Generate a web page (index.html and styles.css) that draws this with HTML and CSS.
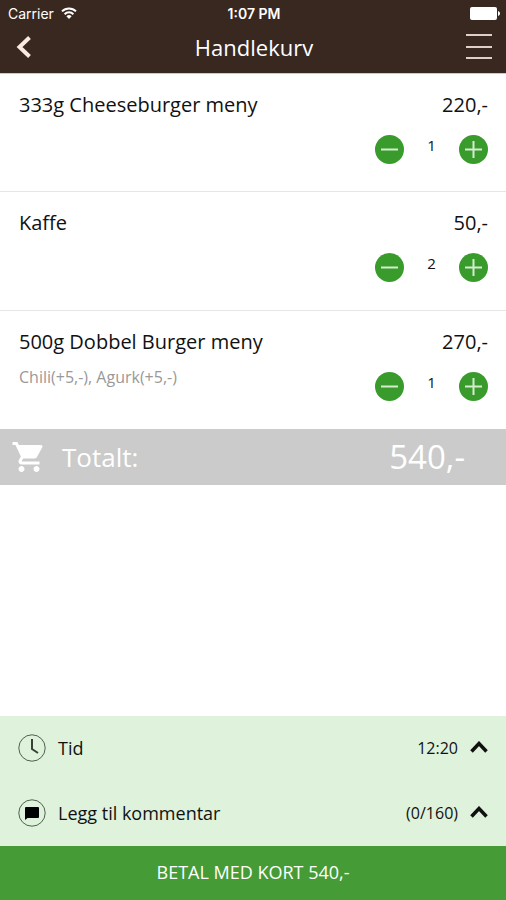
FILE: index.html
```html
<!DOCTYPE html>
<html lang="no">
<head>
<meta charset="utf-8">
<meta name="viewport" content="width=device-width, initial-scale=1">
<title>Handlekurv</title>
<link rel="stylesheet" href="styles.css">
</head>
<body>
<div class="app">
  <header class="header">
    <div class="status">
      <div class="status-carrier">
        <span>Carrier</span>
        <svg width="16" height="12" viewBox="0 0 16 12" fill="none" stroke="currentColor" stroke-width="2" aria-hidden="true">
          <path d="M1 4.400a10 10 0 0 1 14 0M3.600 7.200a6.200 6.200 0 0 1 8.800 0"/>
          <path d="M8 12 5.400 9.300a3.800 3.800 0 0 1 5.200 0Z" fill="currentColor" stroke="none"/>
        </svg>
      </div>
      <div class="status-time">1:07 PM</div>
      <svg class="status-battery" width="30" height="13" viewBox="0 0 30 13" fill="currentColor" aria-hidden="true">
        <rect width="27" height="13" rx="2"/>
        <path d="M28 4c1.400.4 2 1.400 2 2.500s-.6 2.100-2 2.500Z"/>
      </svg>
    </div>
    <nav class="nav">
      <button class="icon-button" type="button" aria-label="Tilbake">
        <svg width="15" height="22" viewBox="0 0 15 22" fill="none" stroke="#fbe9df" stroke-width="4" aria-hidden="true"><path d="M13.500 1.500 3.500 11l10 9.500"/></svg>
      </button>
      <h1 class="title">Handlekurv</h1>
      <button class="icon-button icon-button-end" type="button" aria-label="Meny">
        <svg width="26" height="26" viewBox="0 0 26 26" aria-hidden="true"><path d="M0 0h26v2H0zM0 12h26v2H0zM0 23h26v2H0z" fill="#e0cfc4"/></svg>
      </button>
    </nav>
  </header>

  <main class="main">
    <ul class="items">
      <li class="item">
        <div class="item-line"><h2 class="item-name">333g Cheeseburger meny</h2><span class="item-price">220,-</span></div>
        <div class="item-line">
          <p class="item-extra"></p>
          <div class="stepper">
            <button class="step" type="button" aria-label="Færre"><svg width="29" height="29" viewBox="0 0 29 29" aria-hidden="true"><path d="M6 14.500h17"/></svg></button>
            <output class="quantity">1</output>
            <button class="step" type="button" aria-label="Flere"><svg width="29" height="29" viewBox="0 0 29 29" aria-hidden="true"><path d="M6 14.500h17M14.500 6v17"/></svg></button>
          </div>
        </div>
      </li>
      <li class="item">
        <div class="item-line"><h2 class="item-name">Kaffe</h2><span class="item-price">50,-</span></div>
        <div class="item-line">
          <p class="item-extra"></p>
          <div class="stepper">
            <button class="step" type="button" aria-label="Færre"><svg width="29" height="29" viewBox="0 0 29 29" aria-hidden="true"><path d="M6 14.500h17"/></svg></button>
            <output class="quantity">2</output>
            <button class="step" type="button" aria-label="Flere"><svg width="29" height="29" viewBox="0 0 29 29" aria-hidden="true"><path d="M6 14.500h17M14.500 6v17"/></svg></button>
          </div>
        </div>
      </li>
      <li class="item">
        <div class="item-line"><h2 class="item-name">500g Dobbel Burger meny</h2><span class="item-price">270,-</span></div>
        <div class="item-line">
          <p class="item-extra">Chili(+5,-), Agurk(+5,-)</p>
          <div class="stepper">
            <button class="step" type="button" aria-label="Færre"><svg width="29" height="29" viewBox="0 0 29 29" aria-hidden="true"><path d="M6 14.500h17"/></svg></button>
            <output class="quantity">1</output>
            <button class="step" type="button" aria-label="Flere"><svg width="29" height="29" viewBox="0 0 29 29" aria-hidden="true"><path d="M6 14.500h17M14.500 6v17"/></svg></button>
          </div>
        </div>
      </li>
    </ul>
    <div class="total">
      <svg width="36" height="36" viewBox="0 0 24 24" fill="currentColor" aria-hidden="true"><path d="M7 18c-1.100 0-1.990.9-1.990 2S5.900 22 7 22s2-.9 2-2-.9-2-2-2zM1 2v2h2l3.600 7.590-1.350 2.450c-.16.280-.25.610-.25.960 0 1.100.9 2 2 2h12v-2H7.420c-.14 0-.25-.11-.25-.25l.03-.12.9-1.630h7.450c.75 0 1.410-.41 1.750-1.030l3.580-6.490A1 1 0 0 0 20 4H5.210l-.94-2H1zm16 16c-1.100 0-1.990.9-1.990 2s.89 2 1.990 2 2-.9 2-2-.9-2-2-2z"/></svg>
      <span class="total-label">Totalt:</span>
      <span class="total-sum">540,-</span>
    </div>
  </main>

  <footer class="footer">
    <button class="option" type="button">
      <svg width="28" height="28" viewBox="0 0 28 28" fill="none" aria-hidden="true">
        <circle cx="14" cy="14" r="13.200" stroke="#526050"/>
        <path d="M14 5v10l6 4" stroke="#364235" stroke-width="2"/>
      </svg>
      <span class="option-label">Tid</span>
      <span class="option-value">12:20</span>
      <svg width="18" height="14" viewBox="0 0 18 14" fill="none" stroke="currentColor" stroke-width="3.500" aria-hidden="true"><path d="M1.500 10.500 9 2.500l7.500 8"/></svg>
    </button>
    <button class="option" type="button">
      <svg width="28" height="28" viewBox="0 0 28 28" fill="none" aria-hidden="true">
        <circle cx="14" cy="14" r="13.200" stroke="#526050"/>
        <path d="M8 8h12a1 1 0 0 1 1 1v9a1 1 0 0 1-1 1H9.500L7 21V9a1 1 0 0 1 1-1Z" fill="#000"/>
      </svg>
      <span class="option-label">Legg til kommentar</span>
      <span class="option-value">(0/160)</span>
      <svg width="18" height="14" viewBox="0 0 18 14" fill="none" stroke="currentColor" stroke-width="3.500" aria-hidden="true"><path d="M1.500 10.500 9 2.500l7.500 8"/></svg>
    </button>
    <button class="pay" type="button">BETAL MED KORT 540,-</button>
  </footer>
</div>
</body>
</html>
```
FILE: styles.css
```css
* {
  box-sizing: border-box;
}

body {
  margin: 0;
  background: #fff;
  color: #111;
  font-family: "Open Sans", "Noto Sans", sans-serif;
}

button {
  margin: 0;
  padding: 0;
  border: 0;
  background: none;
  color: inherit;
  font: inherit;
  cursor: pointer;
}

svg {
  display: block;
  flex: none;
}

.app {
  display: flex;
  flex-direction: column;
  min-height: 100vh;
}

.header {
  background: #39281f;
  border-bottom: 1px solid #cfc8c4;
  color: #fff;
}

.status {
  display: grid;
  grid-template-columns: 1fr auto 1fr;
  align-items: center;
  height: 26px;
  padding: 0 6px 0 8px;
  font-family: Inter, "Liberation Sans", sans-serif;
  font-size: 14px;
}

.status-carrier {
  display: flex;
  align-items: center;
  gap: 7px;
}

.status-time {
  font-weight: 600;
}

.status-battery {
  justify-self: end;
}

.nav {
  display: grid;
  grid-template-columns: 1fr auto 1fr;
  align-items: center;
  height: 47px;
  padding: 0 14px 5px 16px;
}

.icon-button {
  justify-self: start;
}

.icon-button-end {
  justify-self: end;
}

.title {
  margin: 0;
  font-size: 22px;
  font-weight: 400;
  line-height: 30px;
}

.main {
  flex: 1;
}

.items {
  margin: 0;
  padding: 0;
  list-style: none;
}

.item {
  height: 119px;
  padding: 16px 18px 0 19px;
  border-bottom: 1px solid #e6e6e6;
}

.item:first-child {
  height: 118px;
}

.item:last-child {
  height: 118px;
  border-bottom: 0;
}

.item-line {
  display: flex;
  justify-content: space-between;
}

.item-name,
.item-price {
  margin: 0;
  font-size: 20px;
  font-weight: 400;
  line-height: 30px;
}

.item-extra {
  margin: 10px 0 0;
  color: #999;
  font-size: 16px;
  line-height: 20px;
}

.stepper {
  display: flex;
  gap: 16px;
  margin-top: 15px;
}

.step {
  height: 29px;
  border-radius: 50%;
  background: #399b2c;
}

.step path {
  fill: none;
  stroke: #d5eccf;
  stroke-width: 2;
}

.quantity {
  width: 23px;
  font-size: 15px;
  line-height: 20px;
  text-align: center;
}

.total {
  display: flex;
  align-items: center;
  height: 56px;
  padding: 0 41px 0 11px;
  background: #cbcbcb;
  color: #fff;
}

.total-label {
  margin-left: 15px;
  font-size: 26px;
}

.total-sum {
  margin-left: auto;
  font-size: 33px;
  line-height: 56px;
}

.footer {
  background: #dff2dc;
}

.option {
  display: flex;
  align-items: center;
  width: 100%;
  height: 65px;
  padding: 0 18px 2px;
  font-size: 18px;
  text-align: left;
}

.option-label {
  margin-left: 12px;
}

.option-value {
  margin-left: auto;
  margin-right: 12px;
  font-size: 16px;
}

.pay {
  width: 100%;
  height: 54px;
  padding-bottom: 2px;
  background: #459b35;
  color: #fff;
  font-size: 18px;
}
```
